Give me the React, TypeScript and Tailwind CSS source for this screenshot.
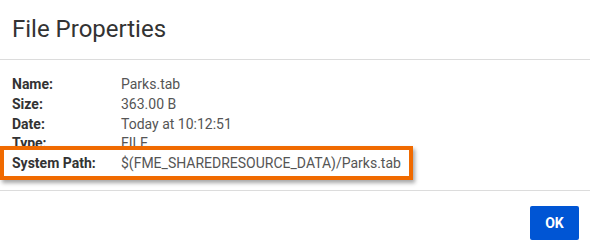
export default function App() {
  const rows: [string, string][] = [
    ["Name:", "Parks.tab"],
    ["Size:", "363.00 B"],
    ["Date:", "Today at 10:12:51"],
    ["Type:", "FILE"],
  ];
  return (
    <div
      className="w-[590px] h-[252px] bg-white flex flex-col overflow-hidden"
      style={{ fontFamily: "Roboto, 'Liberation Sans', sans-serif" }}
    >
      <div className="h-[60px] flex items-center px-[12px] border-b border-[#dcdcdc]">
        <h1 className="text-[24px] leading-none text-[#333] font-normal pb-[2px]">File Properties</h1>
      </div>
      <div className="h-[131px] pt-[15px] px-[12px] border-b border-[#dcdcdc] text-[14px] leading-[19.75px]">
        {rows.map(([k, v]) => (
          <div key={k} className="flex">
            <div className="w-[109px] font-bold text-[#333]">{k}</div>
            <div className="text-[#555]">{v}</div>
          </div>
        ))}
        <div className="relative flex">
          <div className="absolute left-[-12px] top-[-8px] w-[413px] h-[34px] border-[4px] border-[#f06a00] bg-white shadow-[2px_3px_4px_rgba(0,0,0,0.35)]" />
          <div className="relative w-[109px] font-bold text-[#333]">System Path:</div>
          <div className="relative text-[#555]">$(FME_SHAREDRESOURCE_DATA)/Parks.tab</div>
        </div>
      </div>
      <div className="flex justify-end pt-[15px] pr-[11px]">
        <button className="w-[49px] h-[34px] rounded-[2px] bg-[#0055d4] text-white text-[14px] font-bold">
          OK
        </button>
      </div>
    </div>
  );
}
